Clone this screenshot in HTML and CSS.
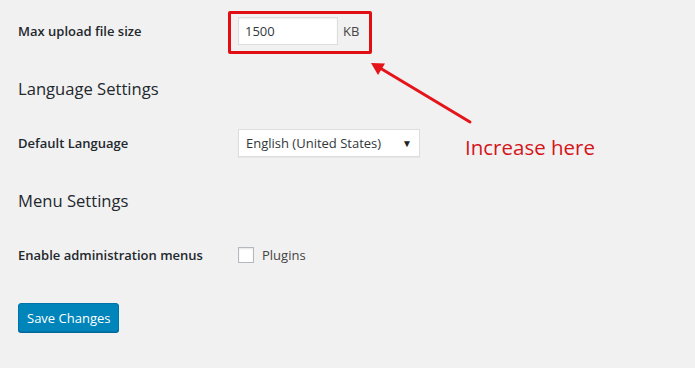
FILE: index.html
```html
<!DOCTYPE html>
<html lang="en">
<head>
    <meta charset="UTF-8">
    <title>Settings</title>
    <link rel="stylesheet" href="styles.css">
</head>
<body>
    <div class="wrap">
        <div class="form-row row-upload">
            <div class="label">Max upload file size</div>
            <div class="field">
                <input type="text" class="text-input" value="1500">
                <span class="unit">KB</span>
            </div>
        </div>

        <h2 class="section-title lang-title">Language Settings</h2>

        <div class="form-row row-lang">
            <div class="label">Default Language</div>
            <div class="field">
                <div class="select">
                    <span>English (United States)</span>
                    <span class="caret">&#9660;</span>
                </div>
            </div>
        </div>

        <h2 class="section-title menu-title">Menu Settings</h2>

        <div class="form-row row-menu">
            <div class="label">Enable administration menus</div>
            <div class="field">
                <span class="checkbox"></span>
                <span class="check-label">Plugins</span>
            </div>
        </div>

        <button class="save-button">Save Changes</button>

        <!-- annotation -->
        <div class="highlight-box"></div>
        <svg class="arrow" width="695" height="368" viewBox="0 0 695 368">
            <line x1="470" y1="122" x2="380" y2="68" stroke="#e4141a" stroke-width="3" stroke-linecap="round"/>
            <polygon points="371,63 385,63.5 378,75" fill="#e4141a"/>
        </svg>
        <div class="note">Increase here</div>
    </div>
</body>
</html>
```

FILE: styles.css
```css
body {
    margin: 0;
    background: #f1f1f1;
    color: #23282d;
    font-family: "Open Sans", "Noto Sans", sans-serif;
    font-size: 13px;
}

.wrap {
    position: relative;
    height: 368px;
    padding: 0 18px;
    display: flex;
    flex-direction: column;
    align-items: flex-start;
    overflow: hidden;
}

.form-row {
    display: flex;
    align-items: center;
    width: 100%;
}

.row-upload {
    height: 62px;
}

.row-lang {
    height: 58px;
}

.row-menu {
    height: 54px;
}

.label {
    width: 220px;
    font-weight: 600;
}

.field {
    display: flex;
    align-items: center;
}

.section-title {
    margin: 0;
    font-size: 16.6px;
    font-weight: 500;
    display: flex;
    align-items: center;
}

.lang-title {
    height: 52px;
}

.menu-title {
    height: 56px;
}

.text-input {
    width: 100px;
    height: 28px;
    box-sizing: border-box;
    padding: 0 6px;
    border: 1px solid #ddd;
    background: #fff;
    box-shadow: inset 0 1px 2px rgba(0,0,0,0.07);
    font-family: inherit;
    font-size: 13px;
    color: #32373c;
    outline: none;
}

.unit {
    margin-left: 5px;
    color: #444;
}

.select {
    width: 182px;
    height: 28px;
    box-sizing: border-box;
    padding: 0 7px;
    border: 1px solid #ddd;
    background: #fff;
    box-shadow: 0 1px 1px rgba(0,0,0,0.04);
    display: flex;
    align-items: center;
    justify-content: space-between;
    color: #32373c;
}

.caret {
    font-size: 10px;
    color: #222;
}

.checkbox {
    width: 16px;
    height: 16px;
    box-sizing: border-box;
    border: 1px solid #b4b9be;
    background: #fff;
    box-shadow: inset 0 1px 2px rgba(0,0,0,0.1);
}

.check-label {
    margin-left: 8px;
    color: #444;
}

.save-button {
    margin-top: 21px;
    height: 29px;
    padding: 0 8px;
    background: #0085ba;
    border: 1px solid #0073aa;
    border-radius: 3px;
    box-shadow: 0 1px 0 #006799;
    color: #fff;
    font-family: inherit;
    font-size: 13px;
    cursor: pointer;
}

.highlight-box {
    position: absolute;
    left: 228px;
    top: 11px;
    width: 144px;
    height: 43px;
    box-sizing: border-box;
    border: 3px solid #e10f14;
    border-radius: 2px;
}

.arrow {
    position: absolute;
    left: 0;
    top: 0;
}

.note {
    position: absolute;
    left: 465px;
    top: 133px;
    font-size: 20.5px;
    color: #d4151b;
}
```
